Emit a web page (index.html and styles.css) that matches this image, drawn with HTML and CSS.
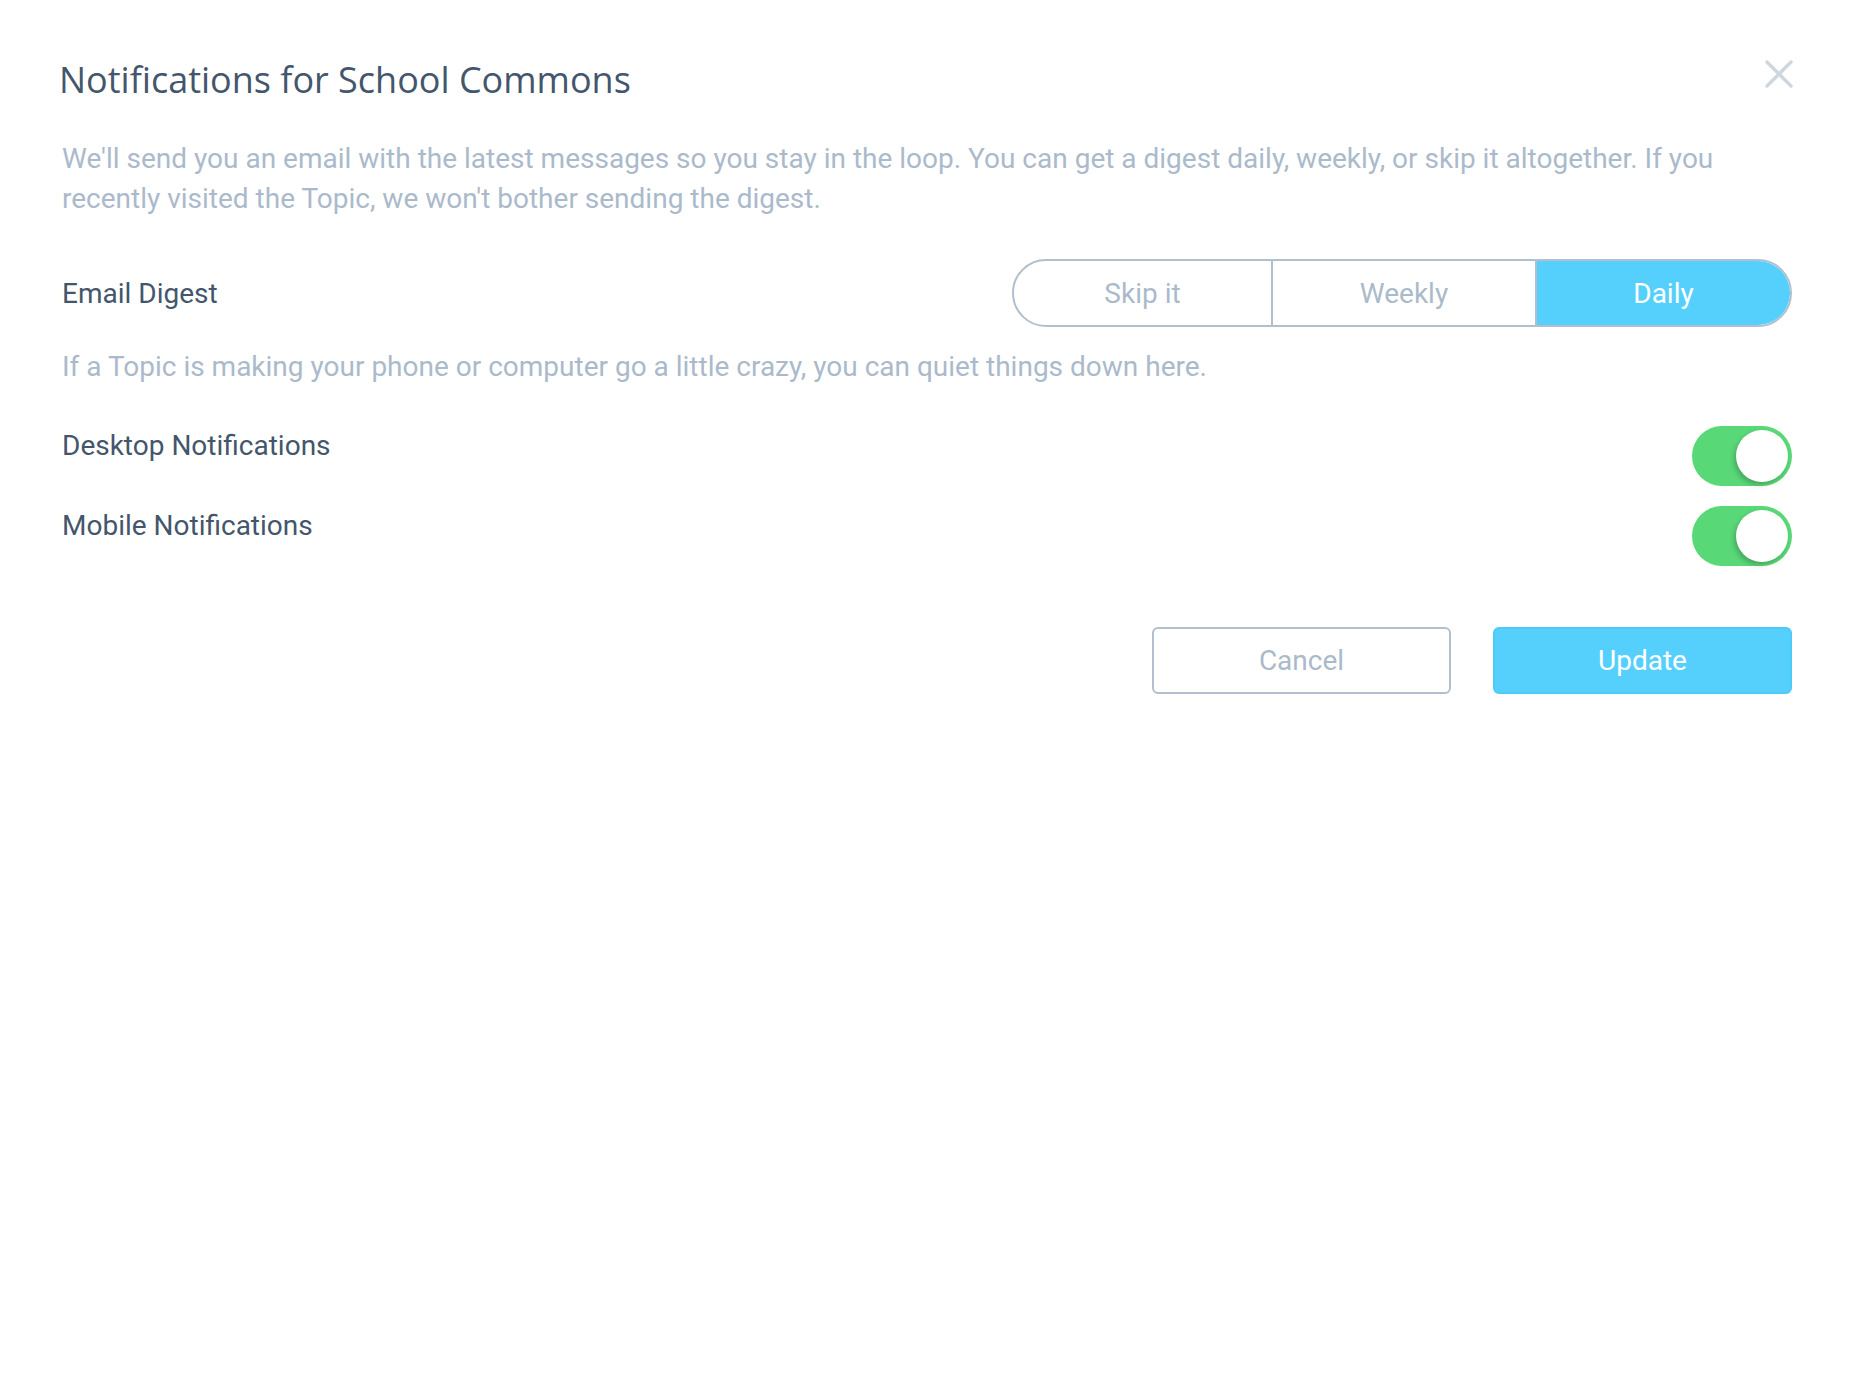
FILE: index.html
```html
<!DOCTYPE html>
<html>
<head>
<meta charset="utf-8">
<link rel="stylesheet" href="styles.css">
</head>
<body>
<div class="modal">
  <header class="head">
    <h1 class="title">Notifications for School Commons</h1>
    <button class="close" aria-label="Close">
      <svg width="28" height="28" viewBox="0 0 28 28"><path d="M2 2 L26 26 M26 2 L2 26" stroke="#cfd6de" stroke-width="3.4" stroke-linecap="round"/></svg>
    </button>
  </header>
  <p class="desc">We'll send you an email with the latest messages so you stay in the loop. You can get a digest daily, weekly, or skip it altogether. If you recently visited the Topic, we won't bother sending the digest.</p>
  <div class="row digest">
    <span class="label">Email Digest</span>
    <div class="seg">
      <span class="seg-item">Skip it</span>
      <span class="seg-item">Weekly</span>
      <span class="seg-item on">Daily</span>
    </div>
  </div>
  <p class="desc desc2">If a Topic is making your phone or computer go a little crazy, you can quiet things down here.</p>
  <div class="row toggle-row first">
    <span class="label">Desktop Notifications</span>
    <span class="toggle"><span class="knob"></span></span>
  </div>
  <div class="row toggle-row">
    <span class="label">Mobile Notifications</span>
    <span class="toggle"><span class="knob"></span></span>
  </div>
  <div class="actions">
    <button class="btn cancel">Cancel</button>
    <button class="btn update">Update</button>
  </div>
</div>
</body>
</html>
```
FILE: styles.css
```css
html, body {
  margin: 0;
  padding: 0;
  background: #fff;
}
body {
  font-family: Roboto, "Liberation Sans", sans-serif;
  color: #44566c;
}
.modal {
  padding: 40px 58px 0 59px;
}
.head {
  display: flex;
  justify-content: space-between;
  align-items: center;
  height: 78px;
}
.title {
  margin: 0;
  font-family: "Open Sans", sans-serif;
  font-weight: 400;
  font-size: 36px;
  color: #44566c;
}
.close {
  border: 0;
  background: none;
  padding: 0;
  margin-right: -1px;
  width: 28px;
  height: 28px;
  margin-top: -10px;
}
.desc {
  margin: 21px 0 0;
  padding-left: 3px;
  font-size: 28px;
  line-height: 40px;
  color: #abbacb;
}
.row {
  display: flex;
  justify-content: space-between;
  align-items: center;
  padding-left: 3px;
}
.label {
  font-size: 28px;
  color: #44566c;
}
.digest {
  margin-top: 40px;
  height: 68px;
}
.seg {
  display: flex;
  width: 780px;
  height: 68px;
  box-sizing: border-box;
  border: 2px solid #b2bfcc;
  border-radius: 34px;
  overflow: hidden;
}
.seg-item {
  flex: 1;
  display: flex;
  align-items: center;
  justify-content: center;
  font-size: 28px;
  color: #abbacb;
}
.seg-item:first-child { flex: 0 0 257px; }
.seg-item:nth-child(2) {
  flex: 0 0 262px;
  border-left: 2px solid #b2bfcc;
  border-right: 2px solid #b2bfcc;
}
.seg-item.on {
  background: #55d0fd;
  color: #fff;
}
.desc2 {
  margin-top: 20px;
}
.toggle-row {
  height: 60px;
  align-items: flex-start;
  margin-top: 20px;
}
.toggle-row.first {
  margin-top: 39px;
}
.toggle-row .label {
  margin-top: 3px;
}
.toggle {
  position: relative;
  width: 100px;
  height: 60px;
  border-radius: 30px;
  background: #59d877;
}
.knob {
  position: absolute;
  right: 4px;
  top: 4px;
  width: 52px;
  height: 52px;
  border-radius: 50%;
  background: #fff;
  box-shadow: -2px 3px 5px rgba(0, 0, 0, 0.22);
}
.actions {
  display: flex;
  justify-content: flex-end;
  gap: 42px;
  margin-top: 61px;
}
.btn {
  width: 299px;
  height: 67px;
  border-radius: 6px;
  font-family: Roboto, sans-serif;
  font-size: 28px;
  box-sizing: border-box;
}
.cancel {
  background: #fff;
  border: 2px solid #b2bfcc;
  color: #abbacb;
}
.update {
  background: #55d0fd;
  border: 2px solid #4ccbfa;
  color: #fff;
}
```
